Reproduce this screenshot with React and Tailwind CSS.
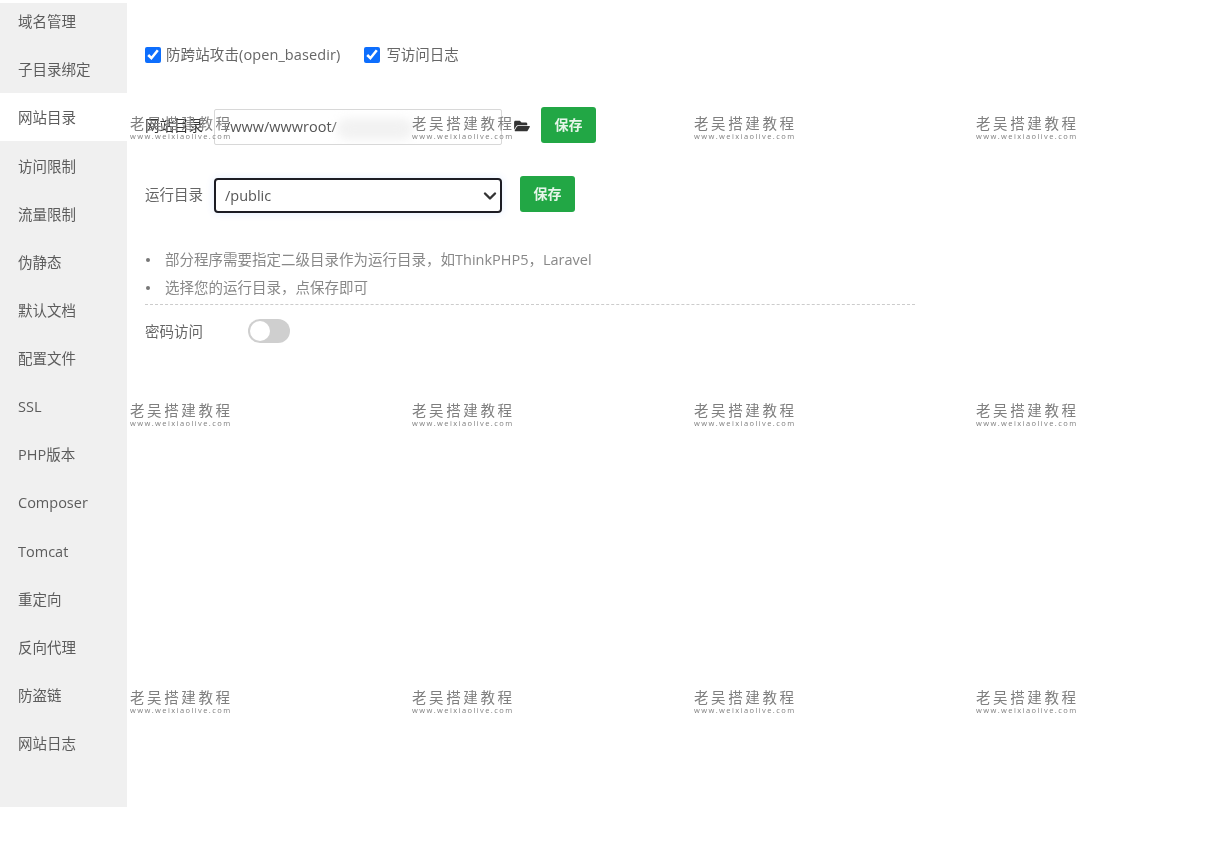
import React from "react";
import { FaFolderOpen } from "react-icons/fa";

const font = { fontFamily: '"Open Sans","Noto Sans CJK SC",sans-serif' };
const items = ["域名管理","子目录绑定","网站目录","访问限制","流量限制","伪静态","默认文档","配置文件","SSL","PHP版本","Composer","Tomcat","重定向","反向代理","防盗链","网站日志"];

function Mark() {
  return (
    <div className="flex flex-col items-start text-[#7f7f7f] leading-none">
      <span className="text-[14.5px] tracking-[2.6px] leading-[16px] whitespace-nowrap">老吴搭建教程</span>
      <span className="text-[7.5px] tracking-[1.42px] leading-[8px] whitespace-nowrap">www.weixiaolive.com</span>
    </div>
  );
}

function Save() {
  return (
    <button className="w-[55px] h-[36px] pb-[2px] rounded-[3px] bg-[#22a745] text-[#e6f5ea] text-[14px] font-bold">保存</button>
  );
}

export default function App() {
  return (
    <div className="relative w-[1220px] h-[844px] bg-white overflow-hidden blur-[0.35px]" style={font}>
      <div className="flex h-[807px] pt-[3px]">
        <aside className="w-[127px] h-[804px] bg-[#f0f0f0] overflow-hidden text-[14.5px] text-[#5c5c5c]">
          <div className="-mt-[6px]">
            {items.map((t) => (
              <div key={t} className={`h-[48.13px] pl-[18px] pt-[2px] flex items-center ${t === "网站目录" ? "bg-white" : ""}`}>{t}</div>
            ))}
          </div>
        </aside>
        <main className="flex-1 pl-[18px] text-[14.5px] text-[#666]">
          <div className="flex items-center h-[20px] mt-[42px]">
            <label className="flex items-center gap-[5px] tracking-[0.1px]">
              <input type="checkbox" defaultChecked className="w-[16px] h-[16px] accent-[#0d6efd]" />
              防跨站攻击(open_basedir)
            </label>
            <label className="flex items-center gap-[6px] ml-[24px]">
              <input type="checkbox" defaultChecked className="w-[16px] h-[16px] accent-[#0d6efd]" />
              写访问日志
            </label>
          </div>
          <div className="flex items-start mt-[42px] h-[38px]">
            <span className="w-[69px] mt-[9px] leading-[20px] text-[#333]">网站目录</span>
            <div className="relative mt-[2px] w-[288px] h-[36px] border border-[#d8d8d8] rounded-[2px] flex items-center pl-[10px] text-[#555] overflow-hidden">
              /www/wwwroot/
              <span className="absolute left-[122px] top-[8px] w-[76px] h-[22px] bg-[#f2f2f2] rounded-full blur-[5px]"></span>
            </div>
            <FaFolderOpen className="ml-[11px] mt-[12px] w-[18px] h-[14px] text-[#333]" />
            <div className="ml-[10px]"><Save /></div>
          </div>
          <div className="flex items-start mt-[31px] h-[38px]">
            <span className="w-[69px] mt-[9px] leading-[20px]">运行目录</span>
            <div className="relative mt-[2px] w-[288px] h-[35px] border-2 border-[#1c1c24] rounded-[4px] flex items-center pl-[9px] text-[#555] shadow-[0_0_8px_rgba(13,110,253,0.12)]">
              /public
              <svg className="absolute right-[3px] top-[11px] w-[14px] h-[10px]" viewBox="0 0 14 10" fill="none" stroke="#333" strokeWidth="2.4" strokeLinecap="round" strokeLinejoin="round"><path d="M2 2.5l5 5 5-5" /></svg>
            </div>
            <div className="ml-[18px]"><Save /></div>
          </div>
          <ul className="mt-[32px] text-[#888]">
            <li className="h-[28px] flex items-center"><span className="w-[4px] h-[4px] rounded-full bg-[#777] ml-[1px] mr-[15px]"></span>部分程序需要指定二级目录作为运行目录，如ThinkPHP5，Laravel</li>
            <li className="h-[28px] flex items-center"><span className="w-[4px] h-[4px] rounded-full bg-[#777] ml-[1px] mr-[15px]"></span>选择您的运行目录，点保存即可</li>
          </ul>
          <div className="w-[770px] border-t border-dashed border-[#ccc] mt-[2px]"></div>
          <div className="flex items-center mt-[14px]">
            <span className="w-[103px] pt-[1px] text-[#666]">密码访问</span>
            <div className="w-[42px] h-[24px] rounded-full bg-[#cfcfcf] p-[2px]">
              <div className="w-[20px] h-[20px] rounded-full bg-white"></div>
            </div>
          </div>
        </main>
      </div>
      <div className="absolute left-[130px] top-[116px] grid grid-cols-[repeat(4,282px)] auto-rows-[287px] pointer-events-none">
        {Array.from({ length: 12 }).map((_, i) => <Mark key={i} />)}
      </div>
    </div>
  );
}
